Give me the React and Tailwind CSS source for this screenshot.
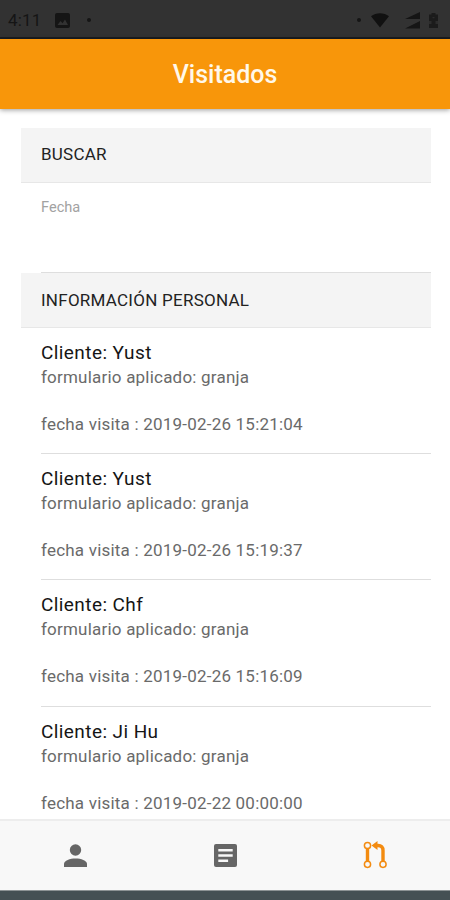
import React from "react";

const visits = [
  { client: "Yust", form: "granja", date: "2019-02-26 15:21:04" },
  { client: "Yust", form: "granja", date: "2019-02-26 15:19:37" },
  { client: "Chf", form: "granja", date: "2019-02-26 15:16:09" },
  { client: "Ji Hu", form: "granja", date: "2019-02-22 00:00:00" },
];

function StatusBar() {
  return (
    <div className="flex h-[39px] shrink-0 items-center border-b-2 border-[#1b1d20] bg-[#323232] pr-[12px] pl-[8px] text-[#151515]">
      <span className="w-[47px] pt-[3px] text-[17px] leading-5 tracking-[0.2px]">4:11</span>
      <svg className="mt-[3px] h-[15px] w-[15px]" viewBox="0 0 15 15">
        <rect width="15" height="15" rx="2" fill="#151515" />
        <path d="M2.5 12 5.5 8 7.5 10.3 10 6.5 13 12Z" fill="#323232" />
      </svg>
      <span className="mt-[2px] ml-[17px] h-1 w-1 rounded-full bg-[#151515]" />
      <span className="mt-[2px] ml-auto h-1 w-1 rounded-full bg-[#151515]" />
      <svg className="mt-[3px] ml-[10px] h-[15px] w-[18px]" viewBox="0 0 18 15">
        <path d="M0 3.3C5-.8 13-.8 18 3.3L9 14.5Z" fill="#111" />
      </svg>
      <svg className="mt-[4px] ml-[16px] h-[17px] w-[15px]" viewBox="0 0 15 17">
        <path d="M0 7 15 0V7ZM0 16.5 15 9V16.5Z" fill="#151515" />
      </svg>
      <svg className="mt-[4px] ml-[9px] h-[15px] w-[9px]" viewBox="0 0 9 15">
        <path d="M2.5 0h4v1.5H9V15H0V1.5h2.5Z" fill="#1b1b1b" />
        <path d="M0 8h2.5v3H0ZM6.5 8H9v3H6.5ZM3.5 4h2v1.2h-2Z" fill="#2c2c2c" />
      </svg>
    </div>
  );
}

function SectionHeader({ children, className = "" }) {
  return (
    <h2
      className={`flex h-[55px] items-center border-b border-[#e7e7e7] bg-[#f4f4f4] pl-5 text-[17px] tracking-[0.25px] text-[#222] ${className}`}
    >
      {children}
    </h2>
  );
}

function Visit({ client, form, date }) {
  return (
    <li className="ml-5 h-[126.2px] border-b border-[#dedede] pt-[12px] text-[17px] tracking-[0.21px] text-[#6a6a6a]">
      <h3 className="text-[19px] leading-[25px] tracking-[0.42px] text-[#151515]">Cliente: {client}</h3>
      <p className="leading-6">formulario aplicado: {form}</p>
      <p className="mt-[23px] leading-6">fecha visita : {date}</p>
    </li>
  );
}

function TabBar() {
  return (
    <nav className="grid h-[71px] shrink-0 grid-cols-3 border-t-2 border-[#ededed] bg-[#f8f8f8] text-[#666]">
      <button aria-label="Clientes" className="flex items-center justify-center">
        <svg className="h-[23px] w-[23px]" viewBox="0 0 23 23" fill="currentColor">
          <circle cx="11.5" cy="6" r="5.7" />
          <path d="M0 23V20C0 16.5 6 14.5 11.5 14.5S23 16.5 23 20V23Z" />
        </svg>
      </button>
      <button aria-label="Formularios" className="flex items-center justify-center">
        <svg className="h-[23px] w-[23px]" viewBox="0 0 23 23">
          <rect width="23" height="23" rx="2" fill="currentColor" />
          <path d="M4.3 6.2h14.4M4.3 11.5h14.4M4.3 16.8h9.8" stroke="#f8f8f8" strokeWidth="2.5" />
        </svg>
      </button>
      <button aria-label="Visitados" className="flex items-center justify-center text-[#f38b10]">
        <svg className="mb-[2px] h-[28px] w-[24px]" viewBox="0 0 24 28" fill="none" stroke="currentColor">
          <path d="M4.5 7.5v13M20 20.5V9.5Q20 4.5 15 4.5H12" strokeWidth="3.4" />
          <path d="M8.5 4.5 14.5 0v9Z" fill="currentColor" stroke="none" />
          <g strokeWidth="1.5" fill="#f8f8f8">
            <circle cx="4.5" cy="4.5" r="3.1" />
            <circle cx="4.5" cy="23.3" r="3.1" />
            <circle cx="20" cy="23.3" r="3.1" />
          </g>
        </svg>
      </button>
    </nav>
  );
}

export default function App() {
  return (
    <div className="flex h-[900px] w-[450px] flex-col overflow-hidden bg-white font-[Roboto,sans-serif]">
      <StatusBar />
      <header className="z-10 flex h-[70px] shrink-0 items-center justify-center bg-[#f8960a] pt-[2px] text-[25px] font-medium text-[#fff8ea] shadow-[0_1px_5px_rgba(0,0,0,0.4)]">
        <h1>Visitados</h1>
      </header>
      <main className="min-h-0 flex-1 overflow-hidden pt-[19px] pr-[19px] pl-[21px]">
        <SectionHeader>BUSCAR</SectionHeader>
        <div className="ml-5 h-[90px] border-b border-[#dedede] pt-[14px]">
          <label className="block text-[14.6px] leading-5 text-[#a2a2a2]">Fecha</label>
        </div>
        <SectionHeader className="pt-px">INFORMACIÓN PERSONAL</SectionHeader>
        <ul>
          {visits.map((visit) => (
            <Visit key={visit.date} {...visit} />
          ))}
        </ul>
      </main>
      <TabBar />
      <div className="h-[10px] shrink-0 border-t border-[#8d9395] bg-[#455054]" />
    </div>
  );
}
